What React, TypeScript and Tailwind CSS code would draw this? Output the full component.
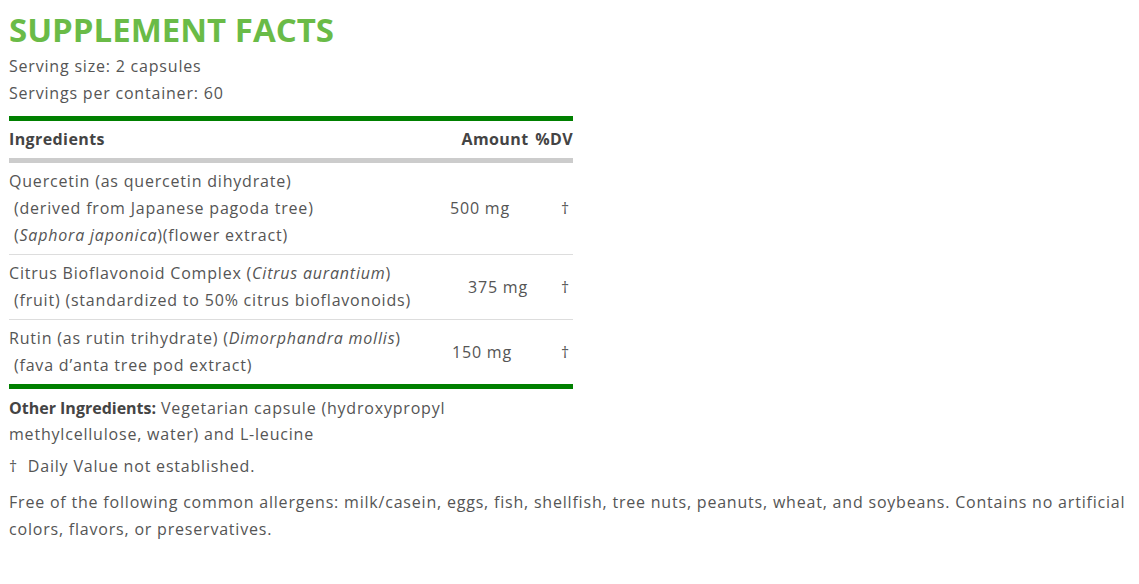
const rows = [
  {
    lines: [
      <>Quercetin (as quercetin dihydrate)</>,
      <>&nbsp;(derived from Japanese pagoda tree)</>,
      <>&nbsp;(<i>Saphora japonica</i>)(flower extract)</>,
    ],
    amount: "500 mg",
    ingWidth: "w-[418px]",
  },
  {
    lines: [
      <>Citrus Bioflavonoid Complex (<i>Citrus aurantium</i>)</>,
      <>&nbsp;(fruit) (standardized to 50% citrus bioflavonoids)</>,
    ],
    amount: "375 mg",
    ingWidth: "w-[454px]",
  },
  {
    lines: [
      <>Rutin (as rutin trihydrate) (<i>Dimorphandra mollis</i>)</>,
      <>&nbsp;(fava d’anta tree pod extract)</>,
    ],
    amount: "150 mg",
    ingWidth: "w-[422px]",
  },
];

export default function App() {
  return (
    <div className="min-h-[584px] bg-white px-[9px] pt-[7px] font-['Open_Sans',sans-serif] text-[16px] leading-[27px] tracking-[0.8px] text-[#555]">
      <h2 className="text-[33px] font-bold leading-[46px] tracking-normal text-[#6abb47]">SUPPLEMENT FACTS</h2>
      <p>Serving size: 2 capsules</p>
      <p>Servings per container: 60</p>

      <div className="mt-[9px] w-[564px]">
        <div className="h-[5px] bg-[#008000]" />
        <div className="flex items-center py-[5px] font-bold tracking-[0.4px] text-[#444]">
          <div className="w-[448px]">Ingredients</div>
          <div className="flex-1 text-center">Amount</div>
          <div className="w-[40px] text-right">%DV</div>
        </div>
        <div className="h-[5px] bg-[#ccc]" />

        {rows.map((row, i) => (
          <div
            key={i}
            className={`flex items-center py-[5px] ${i > 0 ? "border-t border-[#ddd]" : ""}`}
          >
            <div className={`${row.ingWidth} whitespace-pre`}>
              {row.lines.map((line, j) => (
                <div key={j}>{line}</div>
              ))}
            </div>
            <div className="flex-1 text-center">{row.amount}</div>
            <div className="w-[40px] pr-[3px] text-right">†</div>
          </div>
        ))}
        <div className="h-[5px] bg-[#008000]" />
      </div>

      <p className="mt-[6px] w-[460px] leading-[26px]">
        <b className="tracking-normal text-[#444]">Other Ingredients:</b> Vegetarian capsule (hydroxypropyl
        methylcellulose, water) and L-leucine
      </p>
      <p className="mt-[6px]">†&nbsp;&nbsp;Daily Value not established.</p>
      <p className="mt-[9px] w-[1128px]">
        Free of the following common allergens: milk/casein, eggs, fish, shellfish, tree nuts,
        peanuts, wheat, and soybeans. Contains no artificial colors, flavors, or preservatives.
      </p>
    </div>
  );
}
